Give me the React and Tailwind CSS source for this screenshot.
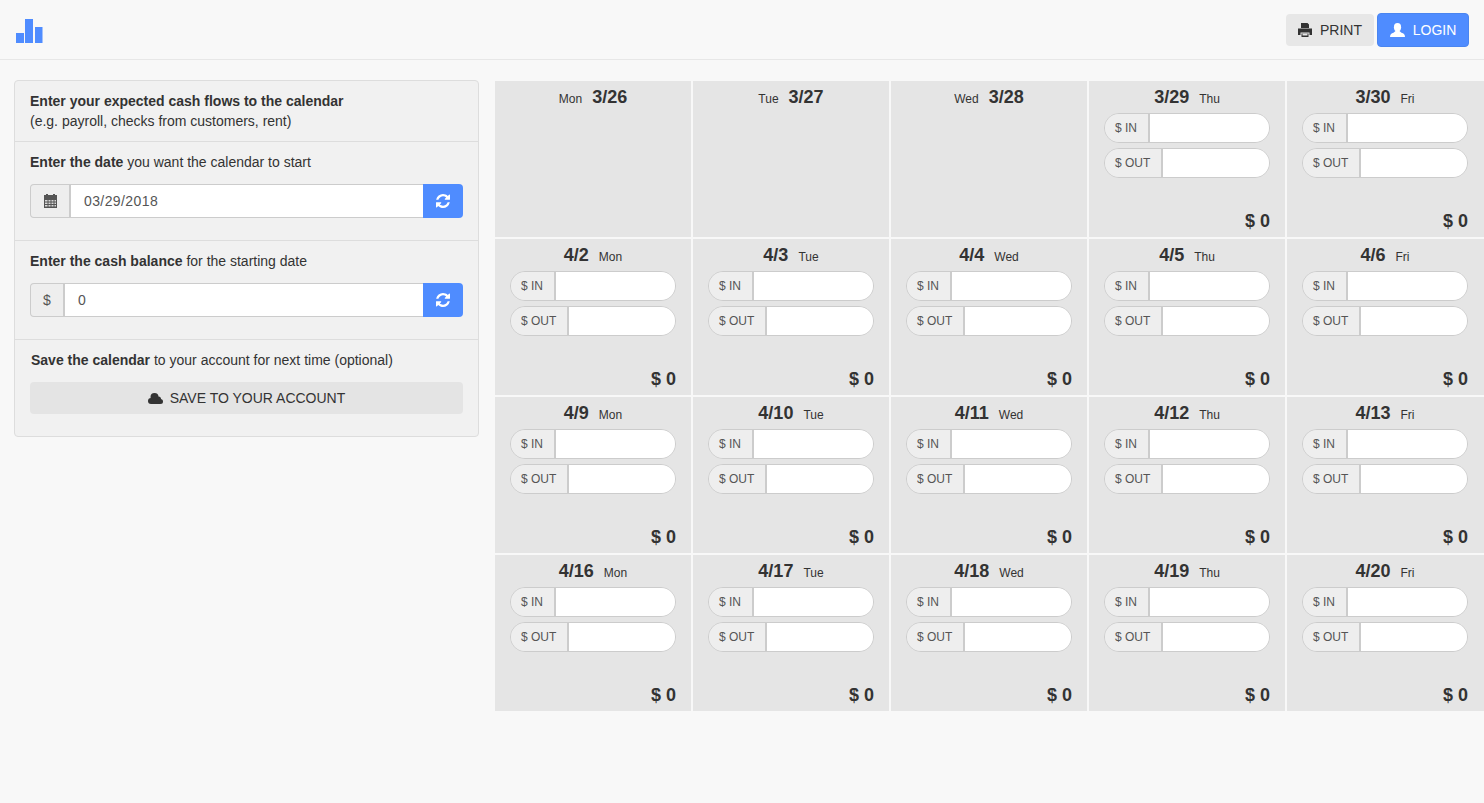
import React from 'react';

const weeks = [
  ['3/26', '3/27', '3/28', '3/29', '3/30'],
  ['4/2', '4/3', '4/4', '4/5', '4/6'],
  ['4/9', '4/10', '4/11', '4/12', '4/13'],
  ['4/16', '4/17', '4/18', '4/19', '4/20'],
];
const dayNames = ['Mon', 'Tue', 'Wed', 'Thu', 'Fri'];

function Logo() {
  return (
    <svg width="28" height="26" viewBox="0 0 28 26" className="mt-1 block">
      <path fill="#4f8cff" d="M0 14h8v10H0zM9 0h8v24H9zM19 8h7.500v16H19z" />
    </svg>
  );
}

function PrintIcon() {
  return (
    <svg width="14" height="14" viewBox="0 0 14 14" fill="currentColor">
      <path d="M3 0h6.500L11 1.500V5H3zM0 5.500h14V12h-2.500V9.500h-9V12H0z" />
      <path d="M3.500 10.500h7V14h-7z" />
      <path fill="#e7e7e7" d="M4.500 10.500h5v2h-5z" />
    </svg>
  );
}

function UserIcon() {
  return (
    <svg width="15" height="14" viewBox="0 0 15 14" fill="currentColor">
      <ellipse cx="7.500" cy="4.200" rx="3.600" ry="4.200" />
      <path d="M0 14c0-2.800 1.500-3.800 3.500-4.300L5.500 8h4l2 1.700c2 .5 3.500 1.500 3.500 4.300z" />
    </svg>
  );
}

function CalendarIcon() {
  return (
    <svg width="13" height="14" viewBox="0 0 13 14" fill="currentColor">
      <path d="M2 0h2v1h5V0h2v1h2v13H0V1h2z" />
      <path
        fill="#d9d9d9"
        d="M1 6h2.500v1.500H1zM4.500 6h2v1.500h-2zM7.500 6h2v1.500h-2zM10.500 6H12v1.500h-1.500zM1 8.500h2.500V10H1zM4.500 8.500h2V10h-2zM7.500 8.500h2V10h-2zM10.500 8.500H12V10h-1.500zM1 11h2.500v1.500H1zM4.500 11h2v1.500h-2zM7.500 11h2v1.500h-2zM10.500 11H12v1.500h-1.500z"
      />
    </svg>
  );
}

function RefreshIcon() {
  return (
    <svg width="14" height="14" viewBox="0 0 1536 1536" fill="currentColor">
      <path d="M1511 928q0 5-1 7-64 268-268 434.500t-478 166.500q-146 0-282.500-55t-243.500-157l-129 129q-19 19-45 19t-45-19-19-45v-448q0-26 19-45t45-19h448q26 0 45 19t19 45-19 45l-137 137q71 66 161 102t187 36q134 0 250-65t186-179q11-17 53-117 8-23 30-23h192q13 0 22.500 9.500t9.500 22.500zm25-800v448q0 26-19 45t-45 19h-448q-26 0-45-19t-19-45 19-45l138-138q-148-137-349-137-134 0-250 65t-186 179q-11 17-53 117-8 23-30 23h-199q-13 0-22.500-9.500t-9.500-22.500v-7q65-268 270-434.500t480-166.500q146 0 284 55.500t245 156.500l130-129q19-19 45-19t45 19 19 45z" />
    </svg>
  );
}

function CloudIcon() {
  return (
    <svg width="15" height="11" viewBox="0 0 15 11" fill="currentColor">
      <circle cx="3" cy="8" r="3" />
      <circle cx="6.500" cy="4" r="4" />
      <circle cx="12.500" cy="8.500" r="2.500" />
      <circle cx="10.500" cy="6" r="2.500" />
      <path d="M3 6h9v5H3z" />
    </svg>
  );
}

function FlowInput({ label }) {
  return (
    <div className="flex h-[30px] w-[166px] overflow-hidden rounded-[15px] border border-[#ccc]">
      <span className="flex items-center border-r-2 border-[#ccc] bg-[#eee] pl-[10px] pr-[11px] text-xs text-[#555]">
        {label}
      </span>
      <input className="min-w-0 flex-1 bg-white outline-none" />
    </div>
  );
}

function DayCell({ date, day, past }) {
  if (past) {
    return (
      <div className="h-[156px] bg-[#e5e5e5] pt-[5px]">
        <div className="flex h-[22px] items-baseline justify-center gap-[10px]">
          <span className="text-xs text-[#333]">{day}</span>
          <span className="text-lg leading-[22px] font-bold text-[#333]">{date}</span>
        </div>
      </div>
    );
  }
  return (
    <div className="flex h-[156px] flex-col bg-[#e5e5e5] pl-[15px] pt-[5px]">
      <div className="flex h-[22px] w-[166px] items-baseline justify-center gap-[10px]">
        <span className="text-lg leading-[22px] font-bold text-[#333]">{date}</span>
        <span className="text-xs text-[#333]">{day}</span>
      </div>
      <div className="mt-[5px] flex flex-col gap-[5px]">
        <FlowInput label="$ IN" />
        <FlowInput label="$ OUT" />
      </div>
      <div className="mt-[33px] w-[166px] text-right text-lg leading-[20px] font-bold text-[#333]">$ 0</div>
    </div>
  );
}

function RefreshButton() {
  return (
    <button className="flex w-10 items-center justify-center rounded-r bg-[#4f8cff] text-white">
      <RefreshIcon />
    </button>
  );
}

function InputGroup({ addon, value, addonClass }) {
  return (
    <div className="flex h-[34px]">
      <span className={`flex items-center justify-center rounded-l border border-r-2 border-[#ccc] bg-[#eee] text-sm text-[#555] ${addonClass}`}>
        {addon}
      </span>
      <input
        defaultValue={value}
        className="min-w-0 flex-1 border-y border-[#ccc] bg-white pl-[13px] pr-3 text-sm tracking-[0.4px] text-[#555] outline-none"
      />
      <RefreshButton />
    </div>
  );
}

export default function App() {
  return (
    <div className="min-h-[803px] bg-[#f8f8f8] font-['Liberation_Sans',Arial,sans-serif] text-sm text-[#333]">
      {/* Header */}
      <header className="flex h-[60px] items-center justify-between border-b border-[#e7e7e7] pl-4 pr-[15px] pt-px">
        <Logo />
        <div className="flex items-center gap-[3px]">
          <button className="flex h-8 w-[88px] items-center justify-center gap-2 rounded bg-[#e7e7e7] text-sm text-[#333]">
            <PrintIcon /> PRINT
          </button>
          <button className="flex h-[34px] w-[92px] items-center justify-center gap-2 rounded border border-[#4a85f0] bg-[#4f8cff] text-sm text-white">
            <UserIcon /> LOGIN
          </button>
        </div>
      </header>

      <main className="flex items-start pl-[14px] pt-[20px]">
        {/* Side panel */}
        <aside className="w-[465px] shrink-0 rounded border border-[#ddd] bg-[#f1f1f1]">
          <div className="h-[61px] border-b border-[#ddd] pl-[15px] pt-[10px] leading-5">
            <p><b>Enter your expected cash flows to the calendar</b></p>
            <p>(e.g. payroll, checks from customers, rent)</p>
          </div>
          <div className="h-[99px] border-b border-[#ddd] px-[15px] pt-[10px]">
            <p className="mb-[12px] leading-5"><b>Enter the date</b> you want the calendar to start</p>
            <InputGroup addon={<CalendarIcon />} value="03/29/2018" addonClass="w-[41px]" />
          </div>
          <div className="h-[99px] border-b border-[#ddd] px-[15px] pt-[10px]">
            <p className="mb-[12px] leading-5"><b>Enter the cash balance</b> for the starting date</p>
            <InputGroup addon="$" value="0" addonClass="w-[35px]" />
          </div>
          <div className="h-[96px] px-[15px] pt-[10px]">
            <p className="mb-[12px] pl-px leading-5"><b>Save the calendar</b> to your account for next time (optional)</p>
            <button className="flex h-8 w-full items-center justify-center gap-[7px] rounded-sm bg-[#e4e4e4] text-sm">
              <CloudIcon /> SAVE TO YOUR ACCOUNT
            </button>
          </div>
        </aside>

        {/* Calendar */}
        <div className="ml-[16px] mt-px grid flex-1 grid-cols-[repeat(4,196px)_1fr] gap-[2px]">
          {weeks.map((week, w) =>
            week.map((date, d) => (
              <DayCell key={date} date={date} day={dayNames[d]} past={w === 0 && d < 3} />
            ))
          )}
        </div>
      </main>
    </div>
  );
}
